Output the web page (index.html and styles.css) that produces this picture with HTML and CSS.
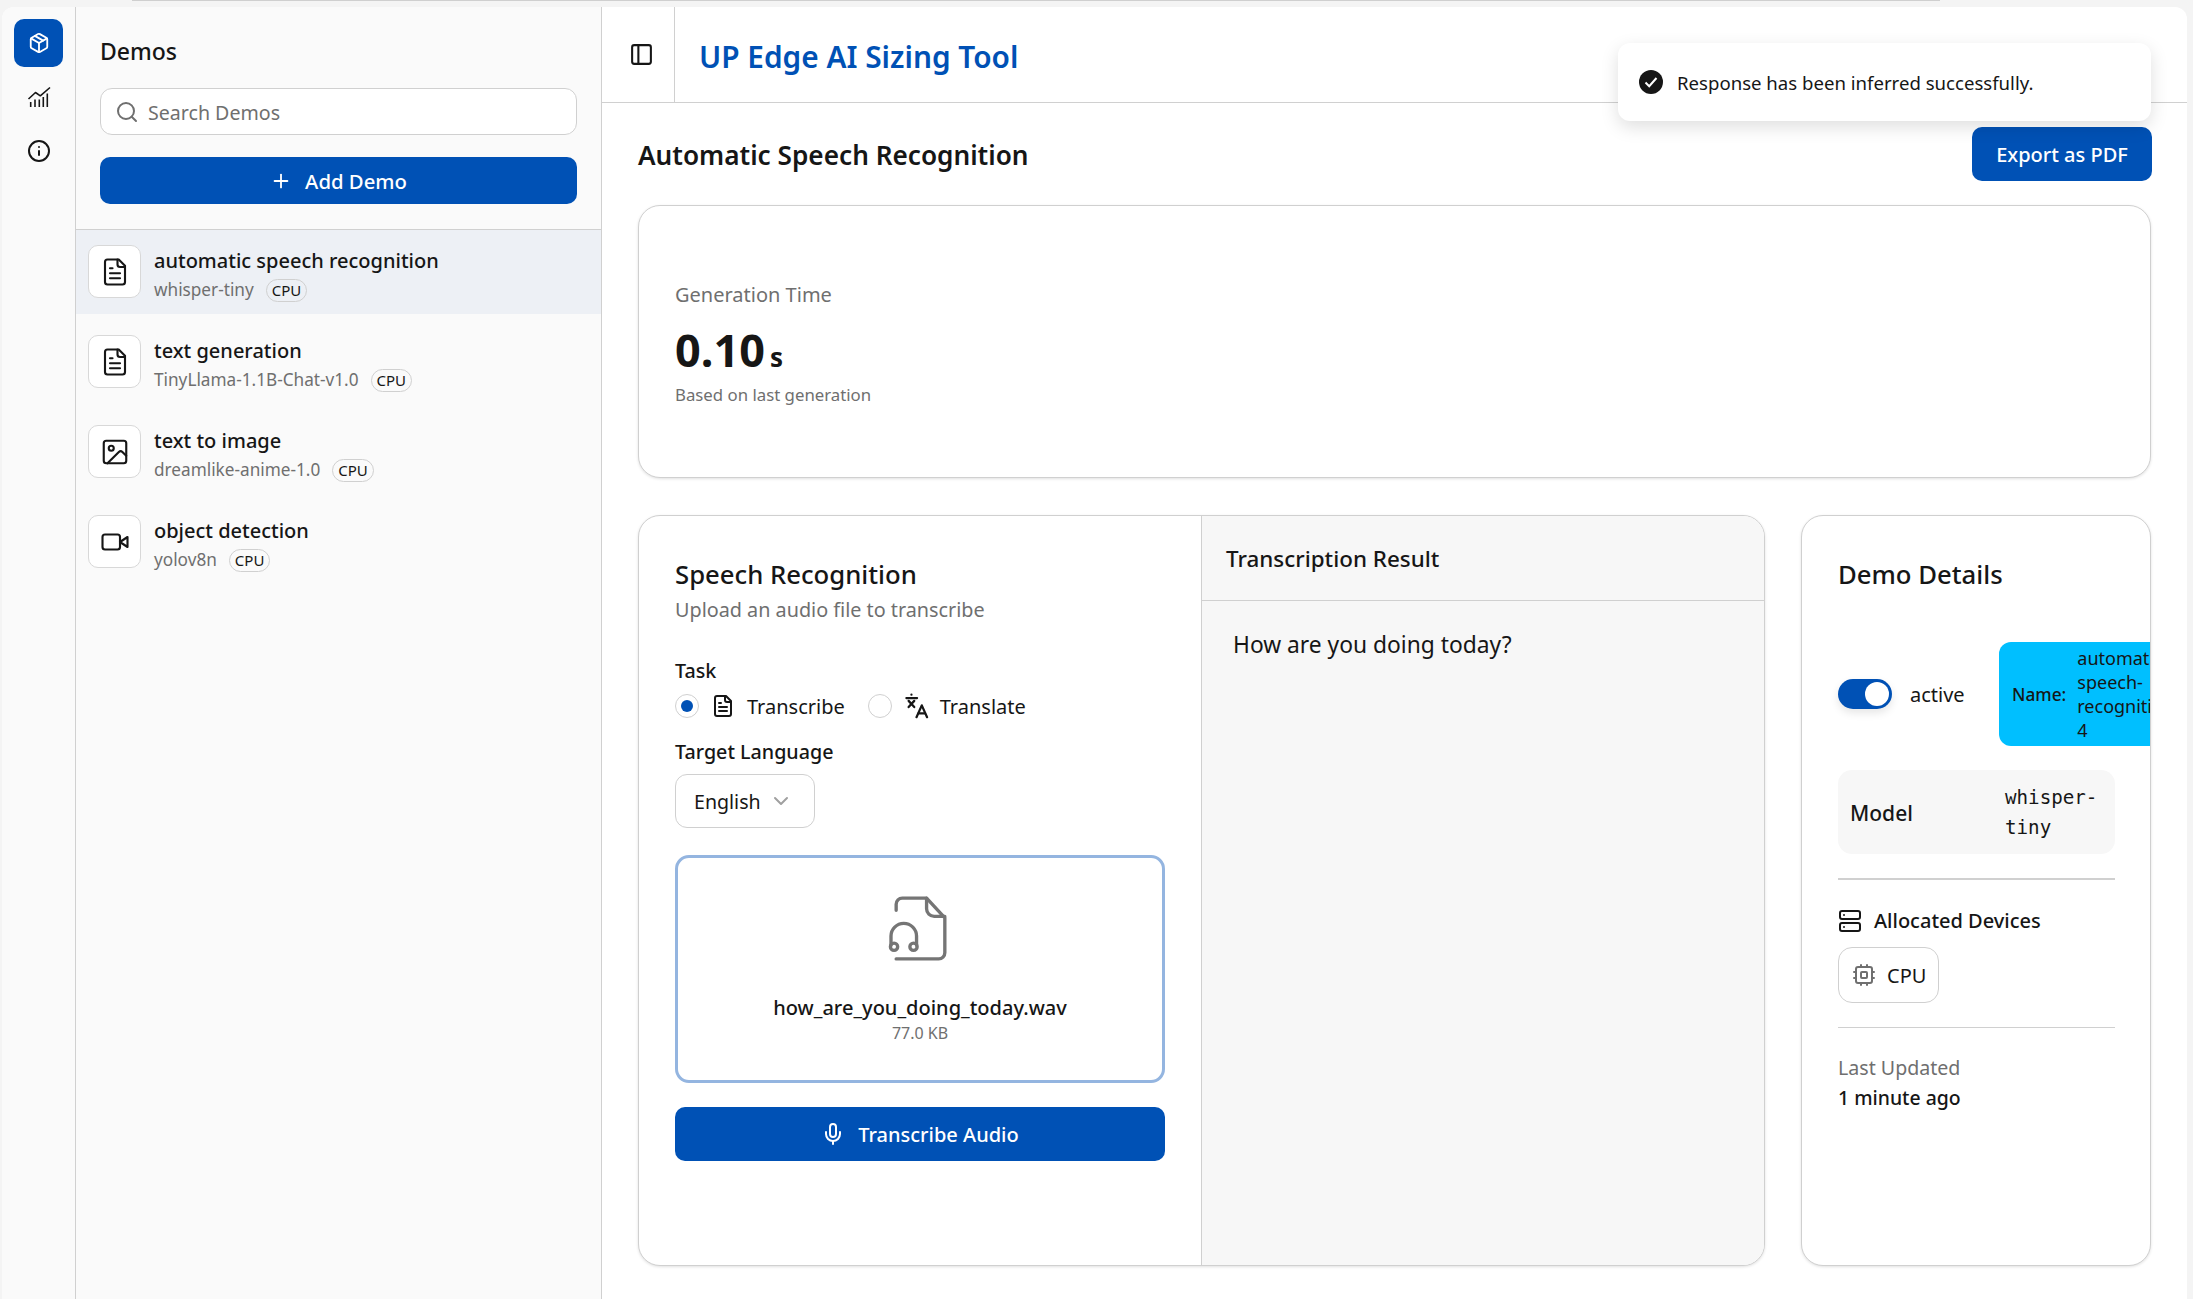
FILE: index.html
```html
<!DOCTYPE html>
<html lang="en">
<head>
    <meta charset="UTF-8">
    <meta name="viewport" content="width=device-width, initial-scale=1.0">
    <title>UP Edge AI Sizing Tool</title>
    <link rel="stylesheet" href="styles.css">
</head>
<body>
    <svg class="sprite" xmlns="http://www.w3.org/2000/svg">
        <symbol id="i-package" viewBox="0 0 24 24"><path d="m7.5 4.27 9 5.15"/><path d="M21 8a2 2 0 0 0-1-1.73l-7-4a2 2 0 0 0-2 0l-7 4A2 2 0 0 0 3 8v8a2 2 0 0 0 1 1.73l7 4a2 2 0 0 0 2 0l7-4A2 2 0 0 0 21 16Z"/><path d="m3.3 7 8.7 5 8.7-5"/><path d="M12 22V12"/></symbol>
        <symbol id="i-chart" viewBox="0 0 24 24"><path d="M1.500 14 8.500 7.500l4.800 3.300L23 2.500"/><path d="M3.700 17v5M8 14.500v7.500M12.300 14.500v7.500M16.300 12v10M20.300 8.500V22"/></symbol>
        <symbol id="i-info" viewBox="0 0 24 24"><circle cx="12" cy="12" r="10"/><path d="M12 16v-4"/><path d="M12 8h.01"/></symbol>
        <symbol id="i-search" viewBox="0 0 24 24"><circle cx="11" cy="11" r="8"/><path d="m21 21-4.300-4.300"/></symbol>
        <symbol id="i-plus" viewBox="0 0 24 24"><path d="M5 12h14"/><path d="M12 5v14"/></symbol>
        <symbol id="i-file" viewBox="0 0 24 24"><path d="M15 2H6a2 2 0 0 0-2 2v16a2 2 0 0 0 2 2h12a2 2 0 0 0 2-2V7Z"/><path d="M14 2v4a2 2 0 0 0 2 2h4"/><path d="M10 9H8"/><path d="M16 13H8"/><path d="M16 17H8"/></symbol>
        <symbol id="i-image" viewBox="0 0 24 24"><rect width="18" height="18" x="3" y="3" rx="2"/><circle cx="9" cy="9" r="2"/><path d="m21 15-3.086-3.086a2 2 0 0 0-2.828 0L6 21"/></symbol>
        <symbol id="i-video" viewBox="0 0 24 24"><path d="m22 8-6 4 6 4V8Z"/><rect width="14" height="12" x="2" y="6" rx="2"/></symbol>
        <symbol id="i-panel" viewBox="0 0 24 24"><rect width="18" height="18" x="3" y="3" rx="2"/><path d="M9 3v18"/></symbol>
        <symbol id="i-translate" viewBox="0 0 24 24"><path d="M7.500 1.500h.01"/><path d="M3 4.500h9.500"/><path d="m5 7 5 5.500"/><path d="m10 7-5 5.500"/><path d="m12 21.500 4.700-10.500 4.700 10.500"/><path d="M13.800 18h5.800"/></symbol>
        <symbol id="i-chevron" viewBox="0 0 24 24"><path d="m6 9 6 6 6-6"/></symbol>
        <symbol id="i-audio" viewBox="0 0 24 24"><path d="M4 6V4a2 2 0 0 1 2-2h8l6 6.500V20a2 2 0 0 1-2 2H4"/><path d="M14 2v3.500A2.500 2.500 0 0 0 16.500 8H20"/><path d="M2.300 17.500v-3a4.200 4.200 0 0 1 8.400 0v3"/><circle cx="3.300" cy="18" r="1.200"/><circle cx="9.700" cy="18" r="1.200"/></symbol>
        <symbol id="i-mic" viewBox="0 0 24 24"><path d="M12 2a3 3 0 0 0-3 3v7a3 3 0 0 0 6 0V5a3 3 0 0 0-3-3Z"/><path d="M19 10v2a7 7 0 0 1-14 0v-2"/><path d="M12 19v3"/></symbol>
        <symbol id="i-server" viewBox="0 0 24 24"><rect width="20" height="8" x="2" y="2" rx="2"/><rect width="20" height="8" x="2" y="14" rx="2"/><path d="M6 6h.01"/><path d="M6 18h.01"/></symbol>
        <symbol id="i-cpu" viewBox="0 0 24 24"><rect width="16" height="16" x="4" y="4" rx="2"/><rect width="6" height="6" x="9" y="9" rx="1"/><path d="M15 2v2M15 20v2M2 15h2M2 9h2M20 15h2M20 9h2M9 2v2M9 20v2"/></symbol>
    </svg>

    <div class="top-line"></div>
    <div class="window">
        <nav class="rail">
            <a class="rail-btn active"><svg class="icon i22"><use href="#i-package"/></svg></a>
            <a class="rail-btn"><svg class="icon i24 thin"><use href="#i-chart"/></svg></a>
            <a class="rail-btn"><svg class="icon i24"><use href="#i-info"/></svg></a>
        </nav>

        <aside class="demos">
            <div class="demos-top">
                <h2>Demos</h2>
                <div class="search">
                    <svg class="icon i24"><use href="#i-search"/></svg>
                    <span>Search Demos</span>
                </div>
                <button class="btn primary add-btn"><svg class="icon i22"><use href="#i-plus"/></svg>Add Demo</button>
            </div>
            <ul class="demo-list">
                <li class="demo-item selected">
                    <div class="demo-icon"><svg class="icon i30"><use href="#i-file"/></svg></div>
                    <div class="demo-text">
                        <div class="demo-name">automatic speech recognition</div>
                        <div class="demo-sub">whisper-tiny <span class="badge">CPU</span></div>
                    </div>
                </li>
                <li class="demo-item">
                    <div class="demo-icon"><svg class="icon i30"><use href="#i-file"/></svg></div>
                    <div class="demo-text">
                        <div class="demo-name">text generation</div>
                        <div class="demo-sub">TinyLlama-1.1B-Chat-v1.0 <span class="badge">CPU</span></div>
                    </div>
                </li>
                <li class="demo-item">
                    <div class="demo-icon"><svg class="icon i30"><use href="#i-image"/></svg></div>
                    <div class="demo-text">
                        <div class="demo-name">text to image</div>
                        <div class="demo-sub">dreamlike-anime-1.0 <span class="badge">CPU</span></div>
                    </div>
                </li>
                <li class="demo-item">
                    <div class="demo-icon"><svg class="icon i30"><use href="#i-video"/></svg></div>
                    <div class="demo-text">
                        <div class="demo-name">object detection</div>
                        <div class="demo-sub">yolov8n <span class="badge">CPU</span></div>
                    </div>
                </li>
            </ul>
        </aside>

        <main class="main">
            <header class="topbar">
                <div class="panel-toggle"><svg class="icon i25"><use href="#i-panel"/></svg></div>
                <h1>UP Edge AI Sizing Tool</h1>
            </header>

            <div class="toast">
                <svg class="toast-check" viewBox="0 0 24 24"><circle cx="12" cy="12" r="12" fill="#161616"/><path d="m6.500 12.500 3.700 3.700 7.300-8.200" fill="none" stroke="#fff" stroke-width="2"/></svg>
                <span>Response has been inferred successfully.</span>
            </div>

            <div class="content">
                <div class="title-row">
                    <h2>Automatic Speech Recognition</h2>
                    <button class="btn primary export-btn">Export as PDF</button>
                </div>

                <section class="card metric">
                    <div class="metric-label">Generation Time</div>
                    <div class="metric-value">0.10<span>s</span></div>
                    <div class="metric-note">Based on last generation</div>
                </section>

                <div class="lower">
                    <section class="card split">
                        <div class="form-side">
                            <h3>Speech Recognition</h3>
                            <p class="hint">Upload an audio file to transcribe</p>

                            <div class="field-label task-label">Task</div>
                            <div class="radios">
                                <span class="radio checked"></span>
                                <svg class="icon i24"><use href="#i-file"/></svg>
                                <span class="radio-text">Transcribe</span>
                                <span class="radio second"></span>
                                <svg class="icon translate"><use href="#i-translate"/></svg>
                                <span class="radio-text">Translate</span>
                            </div>

                            <div class="field-label lang-label">Target Language</div>
                            <div class="select">English <svg class="icon i24"><use href="#i-chevron"/></svg></div>

                            <div class="dropzone">
                                <svg class="icon file-audio"><use href="#i-audio"/></svg>
                                <div class="file-name">how_are_you_doing_today.wav</div>
                                <div class="file-size">77.0 KB</div>
                            </div>

                            <button class="btn primary transcribe-btn"><svg class="icon i24"><use href="#i-mic"/></svg>Transcribe Audio</button>
                        </div>
                        <div class="result-side">
                            <div class="result-head">Transcription Result</div>
                            <div class="result-text">How are you doing today?</div>
                        </div>
                    </section>

                    <section class="card details">
                        <h3>Demo Details</h3>
                        <div class="status-row">
                            <span class="toggle"><i></i></span>
                            <span class="status-text">active</span>
                            <div class="name-pill">
                                <span class="name-key">Name:</span>
                                <span class="name-value">automatic-<br>speech-<br>recognition-<br>4</span>
                            </div>
                        </div>
                        <div class="model-row">
                            <span class="model-key">Model</span>
                            <code>whisper-tiny</code>
                        </div>
                        <hr class="rule thick">
                        <div class="devices-head"><svg class="icon i24"><use href="#i-server"/></svg>Allocated Devices</div>
                        <div class="device"><svg class="icon i24 grey"><use href="#i-cpu"/></svg>CPU</div>
                        <hr class="rule">
                        <div class="updated-label">Last Updated</div>
                        <div class="updated-value">1 minute ago</div>
                    </section>
                </div>
            </div>
        </main>
    </div>
</body>
</html>
```

FILE: styles.css
```css
* {
    box-sizing: border-box;
}

body {
    margin: 0;
    height: 1299px;
    overflow: hidden;
    background-color: #f4f4f4;
    color: #161616;
    font-family: "Noto Sans", Arial, sans-serif;
}

h1, h2, h3, p, ul {
    margin: 0;
    padding: 0;
}

.sprite {
    display: none;
}

.icon {
    flex: none;
    fill: none;
    stroke: currentColor;
    stroke-width: 2;
    stroke-linecap: round;
    stroke-linejoin: round;
}

.i22 { width: 22px; height: 22px; }
.i24 { width: 24px; height: 24px; }
.i25 { width: 25px; height: 25px; }
.i30 { width: 30px; height: 30px; stroke-width: 1.7; }

.thin {
    stroke-width: 1.6;
    stroke-linecap: butt;
}

.grey {
    color: #6f6f6f;
}

.top-line {
    height: 1px;
    margin: 0 253px 6px 132px;
    background-color: #cfcfcf;
}

.window {
    display: flex;
    height: 1292px;
    margin: 0 6px 0 2px;
    background-color: #fff;
    border-radius: 12px 12px 0 0;
    overflow: hidden;
}

/* icon rail */
.rail {
    flex: none;
    display: flex;
    flex-direction: column;
    gap: 6px;
    width: 74px;
    padding: 12px;
    background-color: #fafafa;
    border-right: 1px solid #d0d0d0;
}

.rail-btn {
    display: flex;
    align-items: center;
    justify-content: center;
    height: 48px;
    border-radius: 10px;
}

.rail-btn.active {
    background-color: #0051b5;
    color: #fff;
}

/* demo list */
.demos {
    flex: none;
    width: 526px;
    background-color: #fafafa;
    border-right: 1px solid #d0d0d0;
}

.demos-top {
    padding: 30px 24px 25px;
    border-bottom: 1px solid #d0d0d0;
}

.demos-top h2 {
    font-size: 23px;
    line-height: 28px;
    font-weight: 500;
}

.search {
    display: flex;
    align-items: center;
    gap: 9px;
    height: 47px;
    margin-top: 23px;
    padding: 0 14px;
    background-color: #fff;
    border: 1px solid #d0d0d0;
    border-radius: 12px;
    color: #6f6f6f;
    font-size: 19.600px;
}

.search span {
    margin-top: 2px;
}

.btn {
    display: flex;
    align-items: center;
    justify-content: center;
    border: none;
    border-radius: 10px;
    font-family: inherit;
    font-weight: 500;
    cursor: pointer;
}

.primary {
    background-color: #0051b5;
    color: #fff;
}

.add-btn {
    gap: 13px;
    width: 100%;
    height: 47px;
    margin-top: 22px;
    font-size: 20.300px;
}

.demo-list {
    list-style: none;
}

.demo-item {
    display: flex;
    align-items: flex-start;
    gap: 13px;
    height: 84px;
    margin-bottom: 6px;
    padding: 15px 12px;
}

.demo-item.selected {
    background-color: #edf0f5;
}

.demo-icon {
    flex: none;
    display: flex;
    align-items: center;
    justify-content: center;
    width: 53px;
    height: 53px;
    background-color: #fff;
    border: 1px solid #d8d8d8;
    border-radius: 10px;
}

.demo-text {
    margin-top: 2px;
}

.demo-name {
    font-size: 20px;
    line-height: 27px;
    font-weight: 500;
}

.demo-sub {
    display: flex;
    align-items: center;
    gap: 12px;
    margin-top: 4px;
    color: #6f6f6f;
    font-size: 17.200px;
    line-height: 24px;
}

.badge {
    padding: 0 5px;
    border: 1px solid #d0d0d0;
    border-radius: 12px;
    color: #161616;
    font-size: 15px;
    line-height: 21px;
}

/* main */
.main {
    position: relative;
    flex: 1;
    min-width: 0;
}

.topbar {
    display: flex;
    align-items: stretch;
    height: 96px;
    border-bottom: 1px solid #d0d0d0;
}

.panel-toggle {
    display: flex;
    align-items: center;
    justify-content: center;
    width: 73px;
    padding-left: 6px;
    border-right: 1px solid #d0d0d0;
}

.topbar h1 {
    align-self: center;
    margin-top: 3px;
    padding-left: 24px;
    color: #0051b5;
    font-size: 29.800px;
    font-weight: 600;
}

.toast {
    position: absolute;
    top: 36px;
    right: 36px;
    display: flex;
    align-items: center;
    gap: 14px;
    width: 533px;
    height: 78px;
    padding: 0 21px;
    background-color: #fff;
    border-radius: 12px;
    box-shadow: 0 6px 18px rgba(0, 0, 0, 0.13);
    font-size: 18.600px;
}

.toast-check {
    flex: none;
    width: 24px;
    height: 24px;
}

.content {
    padding: 24px 36px 0;
}

.title-row {
    display: flex;
    align-items: center;
    justify-content: space-between;
    height: 54px;
}

.title-row h2 {
    margin-top: 2px;
    font-size: 26.200px;
    font-weight: 600;
}

.export-btn {
    width: 180px;
    height: 54px;
    margin-right: -1px;
    font-size: 20px;
}

.card {
    background-color: #fff;
    border: 1px solid #d0d0d0;
    border-radius: 22px;
    box-shadow: 0 1px 3px rgba(0, 0, 0, 0.12);
}

.metric {
    display: flex;
    flex-direction: column;
    height: 273px;
    margin-top: 24px;
    padding: 75px 36px 0;
}

.metric-label {
    color: #6f6f6f;
    font-size: 20px;
    line-height: 28px;
}

.metric-value {
    margin-top: 10px;
    font-size: 45px;
    line-height: 62px;
    font-weight: 700;
}

.metric-value span {
    margin-left: 5px;
    font-size: 26px;
}

.metric-note {
    margin-top: -5px;
    color: #6f6f6f;
    font-size: 16.800px;
    line-height: 24px;
}

.lower {
    display: grid;
    grid-template-columns: 1127px 350px;
    gap: 36px;
    height: 751px;
    margin-top: 37px;
}

.split {
    display: flex;
    overflow: hidden;
}

.form-side {
    flex: none;
    width: 563px;
    padding: 39px 36px 0;
    border-right: 1px solid #d0d0d0;
}

.form-side h3,
.details h3 {
    font-size: 25.700px;
    line-height: 40px;
    font-weight: 500;
}

.hint {
    color: #6f6f6f;
    font-size: 19.800px;
    line-height: 30px;
}

.field-label {
    font-size: 19.700px;
    line-height: 28px;
    font-weight: 500;
}

.task-label {
    margin-top: 32px;
}

.radios {
    display: flex;
    align-items: center;
    height: 34px;
    margin-top: 4px;
}

.radio {
    flex: none;
    position: relative;
    width: 24px;
    height: 24px;
    background-color: #fff;
    border: 1px solid #d0d0d0;
    border-radius: 50%;
}

.radio.checked::after {
    content: "";
    position: absolute;
    inset: 5px;
    border-radius: 50%;
    background-color: #0051b5;
}

.radio.second {
    margin-left: -1px;
}

.radios .icon {
    margin-left: 12px;
}

.radios .translate {
    width: 27px;
    height: 27px;
    margin-left: 11px;
    margin-right: -2px;
}

.radio-text {
    margin-left: 12px;
    margin-right: 24px;
    font-size: 20px;
}

.lang-label {
    margin-top: 15px;
}

.select {
    display: flex;
    align-items: center;
    gap: 8px;
    width: 140px;
    height: 54px;
    margin-top: 8px;
    padding: 0 18px;
    border: 1px solid #d0d0d0;
    border-radius: 12px;
    font-size: 19.600px;
}

.select .icon {
    color: #a0a0a0;
}

.dropzone {
    display: flex;
    flex-direction: column;
    align-items: center;
    height: 228px;
    margin-top: 27px;
    padding-top: 34px;
    border: 3px solid #94b5e0;
    border-radius: 14px;
}

.file-audio {
    width: 73px;
    height: 73px;
    color: #757575;
    stroke-width: 1.100;
}

.file-name {
    margin-top: 29px;
    font-size: 20px;
    line-height: 28px;
    font-weight: 500;
}

.file-size {
    color: #6f6f6f;
    font-size: 16px;
    line-height: 22px;
}

.transcribe-btn {
    gap: 13px;
    width: 100%;
    height: 54px;
    margin-top: 24px;
    font-size: 20px;
}

.result-side {
    flex: 1;
    background-color: #f7f7f7;
}

.result-head {
    display: flex;
    align-items: center;
    height: 85px;
    padding-left: 24px;
    border-bottom: 1px solid #d0d0d0;
    font-size: 22.400px;
    font-weight: 500;
}

.result-text {
    padding: 28px 0 0 31px;
    font-size: 22.800px;
    line-height: 32px;
}

/* details card */
.details {
    overflow: hidden;
    padding: 39px 35px 0 36px;
}

.status-row {
    display: flex;
    align-items: center;
    width: 400px;
    margin-top: 47px;
}

.toggle {
    flex: none;
    display: flex;
    align-items: center;
    justify-content: flex-end;
    width: 54px;
    height: 30px;
    padding: 0 3px;
    background-color: #0051b5;
    border-radius: 15px;
    box-shadow: 0 4px 8px rgba(0, 0, 0, 0.1);
}

.toggle i {
    width: 24px;
    height: 24px;
    background-color: #fff;
    border-radius: 50%;
}

.status-text {
    flex: none;
    width: 89px;
    padding-left: 18px;
    font-size: 20px;
}

.name-pill {
    flex: none;
    display: flex;
    align-items: center;
    gap: 12px;
    width: 220px;
    height: 104px;
    margin-left: 18px;
    padding-left: 13px;
    background-color: #00bfff;
    border-radius: 12px;
}

.name-key {
    font-size: 17.300px;
    font-weight: 500;
}

.name-value {
    margin-top: 2px;
    margin-left: -1px;
    font-size: 18px;
    line-height: 23.800px;
}

.model-row {
    display: flex;
    align-items: center;
    justify-content: space-between;
    width: 277px;
    height: 84px;
    margin-top: 24px;
    padding: 2px 12px 0;
    background-color: #f7f7f7;
    border-radius: 14px;
}

.model-key {
    font-size: 21px;
    font-weight: 500;
}

code {
    width: 98px;
    font-family: "DejaVu Sans Mono", "Liberation Mono", monospace;
    font-size: 19.200px;
    line-height: 30px;
}

.rule {
    width: 277px;
    height: 1px;
    margin: 24px 0 0;
    border: none;
    background-color: #d0d0d0;
}

.rule.thick {
    height: 2px;
}

.devices-head {
    display: flex;
    align-items: center;
    gap: 12px;
    margin-top: 27px;
    font-size: 20px;
    line-height: 28px;
    font-weight: 500;
}

.device {
    display: flex;
    align-items: center;
    gap: 11px;
    width: 101px;
    height: 56px;
    margin-top: 12px;
    padding-left: 13px;
    border: 1px solid #d0d0d0;
    border-radius: 14px;
    font-size: 20px;
}

.updated-label {
    margin-top: 25px;
    color: #6f6f6f;
    font-size: 19.600px;
    line-height: 30px;
}

.updated-value {
    font-size: 19.400px;
    line-height: 30px;
    font-weight: 500;
}
```
